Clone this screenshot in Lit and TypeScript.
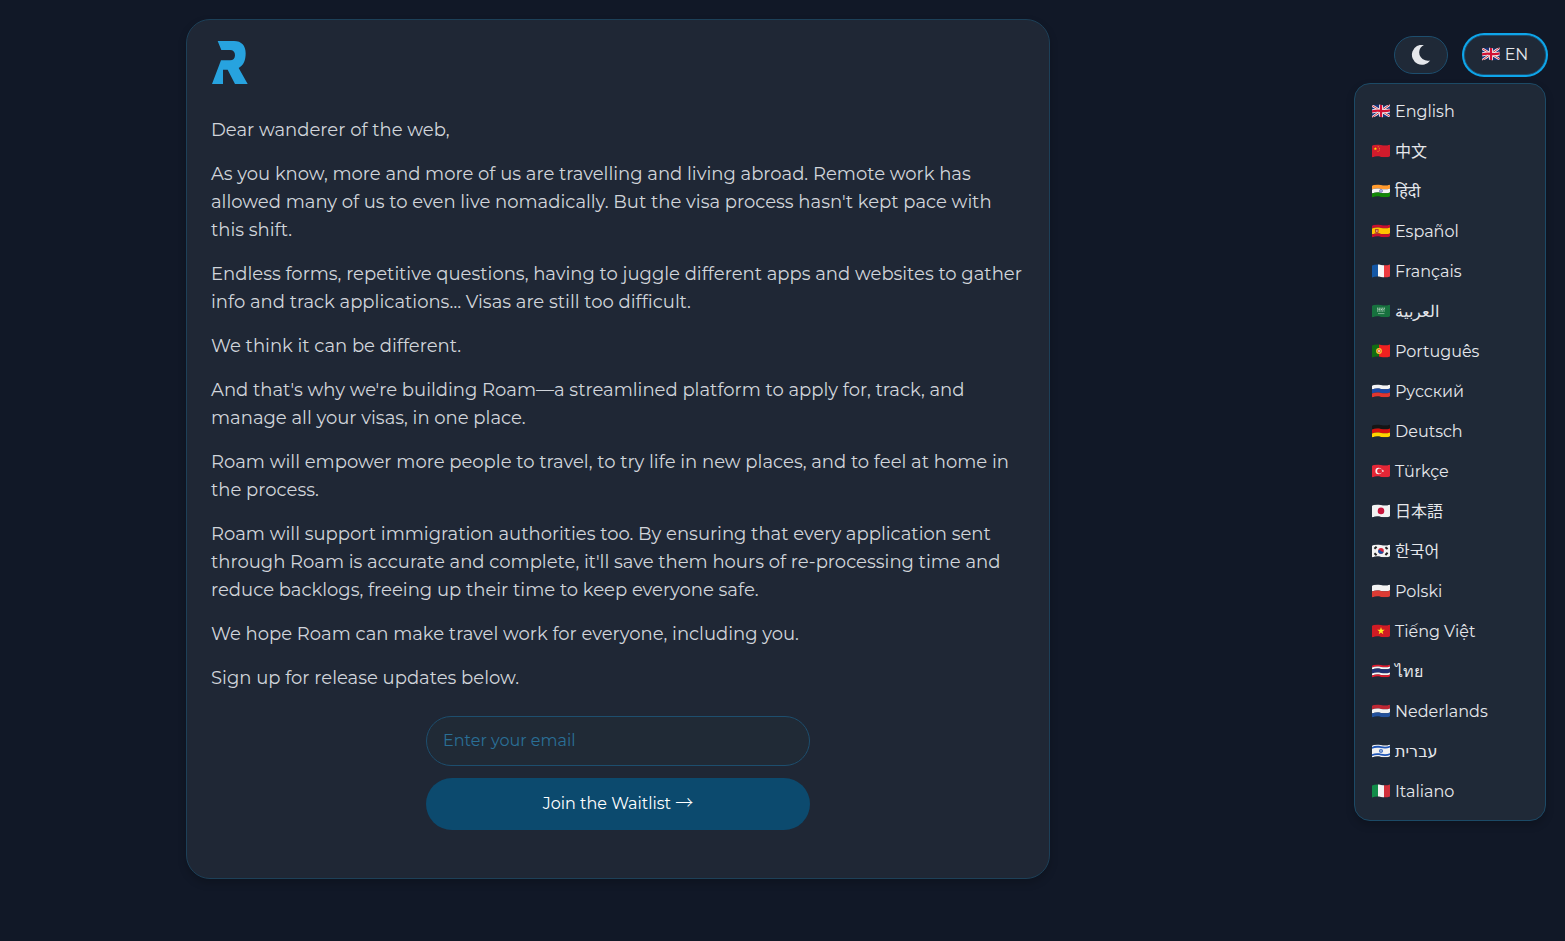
import { LitElement, html, css, svg } from "lit";
import { customElement, state } from "lit/decorators.js";

// A horizontal stripe that follows the ripple of a waving flag.
const band = (y: number, h: number, color: string) => svg`
  <path fill=${color} d=${`M0 ${y + 1.5} C3 ${y + 0.2} 6 ${y + 0.3} 9 ${y + 0.9} S15 ${y + 1.6} 18 ${y + 0.4}
  V${y + h + 0.4} C15 ${y + h + 1.6} 12 ${y + h + 1.5} 9 ${y + h + 0.9} S3 ${y + h + 0.2} 0 ${y + h + 1.5}Z`} />`;
const bar = (x: number, w: number, color: string) =>
  svg`<rect x=${x} y="0" width=${w} height="14" fill=${color} />`;
const dot = (x: number, y: number, r: number, color: string) =>
  svg`<circle cx=${x} cy=${y} r=${r} fill=${color} />`;
const star = (x: number, y: number, s: number, color: string) =>
  svg`<path transform=${`translate(${x} ${y}) scale(${s})`} fill=${color}
    d="M0-1 .24-.32.95-.31.38.12.59.81 0 .4-.59.81-.38.12-.95-.31-.24-.32Z" />`;

const flags: Record<string, unknown> = {
  gb: svg`${band(0, 12, "#1a337c")}
    <path d="M0 1.5 18 12.4M0 13.5 18 .4" stroke="#eee" stroke-width="2.6" />
    <path d="M0 1.5 18 12.4M0 13.5 18 .4" stroke="#d22f3f" stroke-width="1" />
    <path d="M9 0V14M0 7.5C5 6 6 6.4 9 6.9S14 7.6 18 6.4" fill="none" stroke="#eee" stroke-width="4" />
    <path d="M9 0V14M0 7.5C5 6 6 6.4 9 6.9S14 7.6 18 6.4" fill="none" stroke="#d21034" stroke-width="2.3" />`,
  cn: svg`${band(0, 12, "#d01b2c")}${star(3.4, 4.8, 1.9, "#ffde00")}
    ${dot(6.2, 2.8, 0.5, "#f2b01e")}${dot(7.4, 4.2, 0.5, "#f2b01e")}${dot(7.3, 5.9, 0.5, "#f2b01e")}${dot(6, 7.2, 0.5, "#f2b01e")}`,
  in: svg`${band(0, 4, "#ff9a2e")}${band(4, 4, "#f4f4f4")}${band(8, 4, "#128807")}
    <circle cx="9" cy="6.9" r="1.5" fill="#b9b9e0" stroke="#3b3b9c" stroke-width=".5" />`,
  es: svg`${band(0, 3, "#c8102e")}${band(3, 6, "#ffc400")}${band(9, 3, "#c8102e")}
    <path d="M3 5h3.6v3.2q-1.8 2-3.6 0Z" fill="#b5482c" /><path d="M4 6h1.6v2H4Z" fill="#d9a07a" />`,
  fr: svg`${bar(0, 6, "#1457a5")}${bar(6, 6, "#f6f6f6")}${bar(12, 6, "#ed3b40")}`,
  sa: svg`${band(0, 12, "#17713e")}
    <path d="M5 4.2h8M5.4 5.6h7.2M5 7h7.6" stroke="#bcd8c6" stroke-width="1" stroke-dasharray="1.2 .5" />
    <path d="M6 9.6h6.4" stroke="#a9cbb5" stroke-width=".7" />`,
  pt: svg`${bar(0, 7, "#126c12")}${bar(7, 11, "#f02020")}
    ${dot(7, 7, 2.9, "#f6cf30")}${dot(7, 7, 1.7, "#e23b3b")}${dot(7, 7, 0.9, "#f4f4f4")}`,
  ru: svg`${band(0, 4, "#f4f4f4")}${band(4, 4, "#1c49a5")}${band(8, 4, "#e0362f")}`,
  de: svg`${band(0, 4, "#151515")}${band(4, 4, "#d8120c")}${band(8, 4, "#ffd400")}`,
  tr: svg`${band(0, 12, "#e32636")}${dot(6.6, 7, 3.2, "#f4f4f4")}${dot(7.6, 7, 2.5, "#e32636")}${star(10.8, 6.9, 1.6, "#f4f4f4")}`,
  jp: svg`${band(0, 12, "#f2f2f2")}${dot(9, 6.9, 3.3, "#c8163c")}`,
  kr: svg`${band(0, 12, "#f2f2f2")}${dot(9, 6.9, 2.8, "#d2253a")}
    <path d="M6.3 6.2A2.8 2.8 0 0 0 11.7 7.7Q10.2 8.2 9 6.9T6.3 6.2" fill="#1451a5" />
    <path d="M2.4 4.8 4.6 2.7M13.4 3.2l2.2 1.9M2.4 9.2l2.2 2M13.4 11l2.2-2.2" stroke="#222" stroke-width="2" />`,
  pl: svg`${band(0, 6, "#f2f2f2")}${band(6, 6, "#dc3b34")}`,
  vn: svg`${band(0, 12, "#d01b24")}${star(9, 7, 3.9, "#ffeb1f")}`,
  th: svg`${band(0, 2, "#df1b2e")}${band(2, 2, "#f4f4f4")}${band(4, 4, "#20306f")}${band(8, 2, "#f4f4f4")}${band(10, 2, "#df1b2e")}`,
  nl: svg`${band(0, 4, "#bd2733")}${band(4, 4, "#f2f2f2")}${band(8, 4, "#22509b")}`,
  il: svg`${band(0, 12, "#f2f2f2")}${band(1.4, 1.8, "#1f55b5")}${band(8.8, 1.8, "#1f55b5")}
    <path d="M9 4.9 10.8 8H7.2ZM9 9 7.2 5.9h3.6Z" fill="none" stroke="#1f55b5" stroke-width=".6" />`,
  it: svg`${bar(0, 6, "#118c49")}${bar(6, 6, "#f2f2f2")}${bar(12, 6, "#d02f3a")}`,
};

const languages: [string, string, string][] = [
  ["gb", "English", "en"],
  ["cn", "中文", "zh"],
  ["in", "हिंदी", "hi"],
  ["es", "Español", "es"],
  ["fr", "Français", "fr"],
  ["sa", "العربية", "ar"],
  ["pt", "Português", "pt"],
  ["ru", "Русский", "ru"],
  ["de", "Deutsch", "de"],
  ["tr", "Türkçe", "tr"],
  ["jp", "日本語", "ja"],
  ["kr", "한국어", "ko"],
  ["pl", "Polski", "pl"],
  ["vn", "Tiếng Việt", "vi"],
  ["th", "ไทย", "th"],
  ["nl", "Nederlands", "nl"],
  ["il", "עברית", "he"],
  ["it", "Italiano", "it"],
];

const letter = [
  "Dear wanderer of the web,",
  "As you know, more and more of us are travelling and living abroad. Remote work has allowed many of us to even live nomadically. But the visa process hasn't kept pace with this shift.",
  "Endless forms, repetitive questions, having to juggle different apps and websites to gather info and track applications… Visas are still too difficult.",
  "We think it can be different.",
  "And that's why we're building Roam—a streamlined platform to apply for, track, and manage all your visas, in one place.",
  "Roam will empower more people to travel, to try life in new places, and to feel at home in the process.",
  "Roam will support immigration authorities too. By ensuring that every application sent through Roam is accurate and complete, it'll save them hours of re-processing time and reduce backlogs, freeing up their time to keep everyone safe.",
  "We hope Roam can make travel work for everyone, including you.",
  "Sign up for release updates below.",
];

@customElement("app-root")
export class AppRoot extends LitElement {
  @state() private open = true;

  static styles = css`
    :host {
      display: flex;
      align-items: flex-start;
      min-height: 100vh;
      box-sizing: border-box;
      background: #111827;
      color: #d1d5db;
      font-family: Montserrat, "Noto Sans CJK JP", "Noto Sans", sans-serif;
      font-weight: 400;
      font-size: 16px;
      line-height: 24px;
    }
    * {
      box-sizing: border-box;
    }
    button,
    input {
      font: inherit;
      color: inherit;
      margin: 0;
    }
    button {
      cursor: pointer;
    }
    main {
      flex: 1;
      min-width: 0;
      padding: 19px 16px;
    }
    .card {
      max-width: 864px;
      margin: 0 auto;
      padding: 21px 24px 48px;
      border: 1px solid #1d4058;
      border-radius: 24px;
      background: #1f2735;
      box-shadow: 0 4px 8px rgba(0, 0, 0, 0.2);
    }
    .logo {
      display: block;
      margin-bottom: 32px;
    }
    p {
      margin: 0 0 16px;
      font-size: 18px;
      line-height: 28px;
    }
    form {
      display: flex;
      flex-direction: column;
      gap: 12px;
      max-width: 384px;
      margin: 24px auto 0;
    }
    .email {
      width: 100%;
      height: 50px;
      padding: 0 16px 2px;
      border: 1px solid #1d4e6e;
      border-radius: 25px;
      background: #202a36;
      outline: none;
    }
    .email::placeholder {
      color: #2a6f96;
      opacity: 1;
    }
    .join {
      height: 52px;
      border: 0;
      border-radius: 26px;
      background: #0c4a6e;
      color: #fff;
    }
    .arrow {
      font-family: "Noto Sans CJK JP", sans-serif;
      font-size: 18px;
      font-weight: 300;
      line-height: 1;
    }
    aside {
      flex: none;
      width: 329px;
      padding: 35px 19px 0 0;
      display: flex;
      flex-direction: column;
      align-items: flex-end;
      gap: 8px;
    }
    .controls {
      display: flex;
      align-items: center;
      gap: 16px;
    }
    .pill {
      display: flex;
      align-items: center;
      justify-content: center;
      gap: 5px;
      border: 1px solid #1d4e6e;
      border-radius: 20px;
      background: #1f2937;
      padding: 0;
    }
    .theme {
      width: 54px;
      height: 38px;
    }
    .lang {
      width: 82px;
      height: 40px;
      color: #e5e7eb;
      box-shadow: 0 0 0 2px #0ea5e9;
      outline: none;
    }
    .menu {
      width: 192px;
      margin: 0;
      padding: 8px 0;
      list-style: none;
      color: #e5e7eb;
      border: 1px solid #1c4a66;
      border-radius: 16px;
      background: #1f2937;
      box-shadow: 0 4px 8px rgba(0, 0, 0, 0.2);
    }
    .item {
      display: flex;
      align-items: center;
      gap: 5px;
      width: 100%;
      height: 40px;
      padding: 0 17px;
      border: 0;
      background: none;
      text-align: start;
    }
    .flag {
      flex: none;
      width: 18px;
      height: 14px;
      margin-bottom: 2px;
      clip-path: path("M0 1.5C3 .2 6 .3 9 .9S15 1.6 18 .4V12.4C15 13.6 12 13.5 9 12.9S3 12.2 0 13.5Z");
    }
    :lang(he) {
      font-family: "DejaVu Sans", sans-serif;
    }
  `;

  private flag(code: string) {
    return html`<svg class="flag" viewBox="0 0 18 14" aria-hidden="true">${flags[code]}</svg>`;
  }

  render() {
    return html`
      <main>
        <article class="card">
          <svg class="logo" width="37" height="43" viewBox="75 93 111 129" role="img" aria-label="Roam">
            <path
              fill="#27a3df"
              d="M95 93H144C167 93 179 107 179 130C179 151 173 166 158 174L185 222H147L125 179H111V222H78L105 151H132C142 151 147 145 147 136C147 126 142 120 132 120H106Z"
            />
          </svg>
          ${letter.map((text) => html`<p>${text}</p>`)}
          <form @submit=${(e: Event) => e.preventDefault()}>
            <input class="email" type="email" aria-label="Email" placeholder="Enter your email" />
            <button class="join" type="submit">Join the Waitlist <span class="arrow">→</span></button>
          </form>
        </article>
      </main>
      <aside>
        <div class="controls">
          <button class="pill theme" type="button" aria-label="Toggle theme">
            <svg width="20" height="20" viewBox="0 0 20 20" aria-hidden="true">
              <path
                fill="#e5e7eb"
                d="M12.9 0A10 10 0 1 0 19.2 15.4C17.6 15.9 15.8 15.9 14.2 15.3C10 13.8 8 10.4 8.2 7C8.4 3.8 10.2 1.2 12.9 0Z"
              />
            </svg>
          </button>
          <button
            class="pill lang"
            type="button"
            aria-expanded=${this.open ? "true" : "false"}
            @click=${() => (this.open = !this.open)}
          >
            ${this.flag("gb")}<span>EN</span>
          </button>
        </div>
        ${this.open
          ? html`<ul class="menu">
              ${languages.map(
                ([code, name, lang]) => html`<li>
                  <button class="item" type="button">${this.flag(code)}<span lang=${lang}>${name}</span></button>
                </li>`
              )}
            </ul>`
          : null}
      </aside>
    `;
  }
}
